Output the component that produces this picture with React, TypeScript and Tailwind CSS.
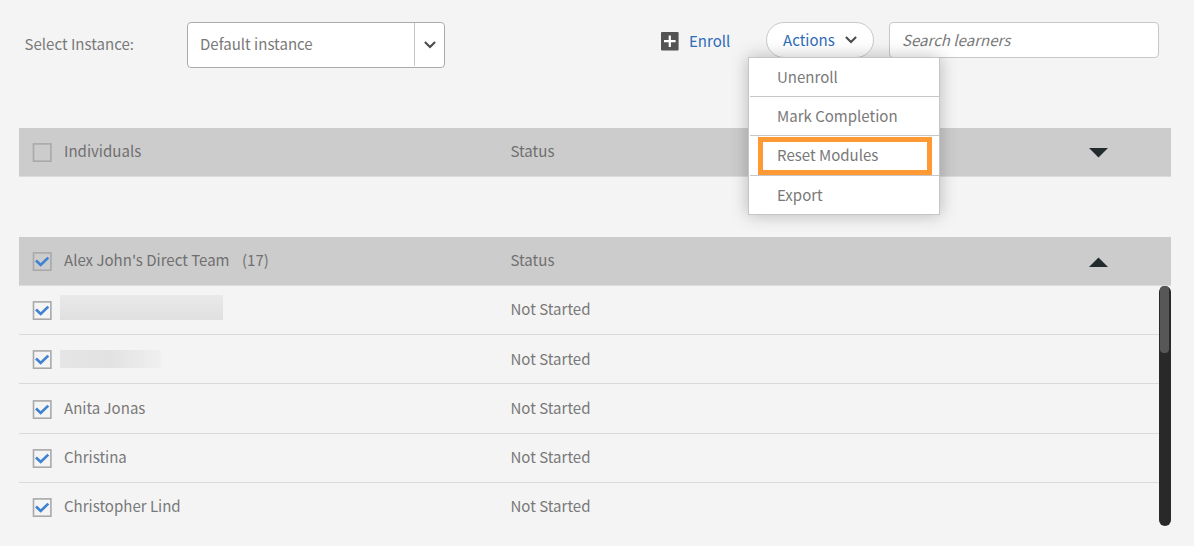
import type { ReactNode } from "react";

type Learner = { name?: string; row: string; text: string; blur?: string };

const learners: Learner[] = [
  { row: "h-[49px]", text: "pt-[11px]", blur: "mt-[9px] h-[25px] w-[163px] bg-gradient-to-b from-[#e9e9e9] to-[#e0e0e0]" },
  { row: "h-[49px]", text: "pt-[12px]", blur: "mt-[15px] h-[18px] w-[101px] bg-gradient-to-r from-[#e5e5e5] via-[#e2e2e2] to-[#f0f0f0]" },
  { name: "Anita Jonas", row: "h-[50px]", text: "pt-[12px]" },
  { name: "Christina", row: "h-[49px]", text: "pt-[11px]" },
  { name: "Christopher Lind", row: "h-[43px]", text: "pt-[11px]" },
];

const menu = [
  { label: "Unenroll", size: "h-[39px] border-b" },
  { label: "Mark Completion", size: "h-[39px] border-b" },
  { label: "Reset Modules", size: "h-[40px] border-b", marked: true },
  { label: "Export", size: "h-[38px]" },
];

function Checkbox({ checked = false }: { checked?: boolean }) {
  return (
    <svg width="20" height="19" viewBox="0 0 20 19" fill="none" className="-ml-px block shrink-0">
      <rect x="1.5" y="0.9" width="17.4" height="17.3" stroke="#a9a9a9" strokeWidth="1.6" />
      {checked && <path d="M4 8.6L8.7 13L16.3 5.6" stroke="#3f82d2" strokeWidth="2.7" />}
    </svg>
  );
}

function Chevron() {
  return (
    <svg width="12" height="8" viewBox="0 0 12 8" fill="none" className="block shrink-0">
      <path d="M0.9 1.1L6 6.1L11.1 1.1" stroke="#4b4b4b" strokeWidth="2.1" />
    </svg>
  );
}

function GroupHeader({ title, checked, open }: { title: ReactNode; checked?: boolean; open?: boolean }) {
  return (
    <div className="flex h-[49px] border-b border-[#dcdcdc] bg-[#cccccc] pl-[14px] text-[#707070]">
      <div className="w-[31px] pt-[15px]">
        <Checkbox checked={checked} />
      </div>
      <div className="w-[446.5px] pt-[11px]">{title}</div>
      <div className="w-[578px] pt-[11px]">Status</div>
      <svg width="20" height="10" viewBox="0 0 20 10" className="mt-[20px]">
        <path d={open ? "M0 10L9.5 0.5L19 10Z" : "M0 0L9.5 9.5L19 0Z"} fill="#222b2d" />
      </svg>
    </div>
  );
}

export default function App() {
  return (
    <div className="h-[546px] w-[1194px] overflow-hidden bg-[#f4f4f4] px-[19px] pt-[22px] font-['Noto_Sans_CJK_SC',sans-serif] text-[15.04px] leading-[24px] text-[#797979]">
      <div className="flex h-[106px] items-start">
        <div className="w-[168px] pt-[10px] pl-[5.5px]">Select Instance:</div>
        <div className="flex h-[46px] w-[258px] rounded-[4px] border border-[#a9abac] bg-white">
          <div className="flex-1 pt-[9px] pl-[12px]">Default instance</div>
          <div className="mb-px flex w-[30px] items-center border-l border-[#c6c6c6] pt-px pl-[9px]">
            <Chevron />
          </div>
        </div>
        <div className="ml-[216px] flex pt-[7px] text-[#2f6cb8]">
          <svg width="18" height="19" viewBox="0 0 18 19" className="mt-[3px] mr-[10px] block">
            <rect width="17.6" height="18.4" rx="1" fill="#535353" />
            <path d="M8.8 3.4V15M3 9.2H14.6" stroke="#fff" strokeWidth="2.2" />
          </svg>
          Enroll
        </div>
        <div className="relative ml-auto">
          <button className="flex h-[36px] w-[108px] items-center rounded-full border border-[#c9c9c9] bg-white pl-[16px] text-[#2f6cb8]">
            <span className="w-[62px] text-left">Actions</span>
            <Chevron />
          </button>
          <div className="absolute top-[35px] left-[-18px] z-10 w-[192px] border border-[#c6c6c6] bg-white pl-px shadow-[0_0_16px_rgba(0,0,0,0.25)]">
            {menu.map((m) => (
              <div key={m.label} className={`relative border-[#c6c6c6] pt-[7px] pl-[27px] ${m.size}`}>
                {m.label}
                {m.marked && <div className="absolute top-[1px] left-[8px] h-[38px] w-[174px] border-5 border-[#ff9933]" />}
              </div>
            ))}
          </div>
        </div>
        <div className="mr-[16px] ml-[15px] h-[36px] w-[270px] rounded-[4px] border border-[#c8c8c8] bg-white pt-[5px] pl-[12px] italic">
          Search learners
        </div>
      </div>
      <div className="w-[1152px]">
        <GroupHeader title="Individuals" />
        <div className="mt-[60px]">
          <GroupHeader
            checked
            open
            title={
              <>
                Alex John's Direct Team<span className="ml-[12.5px]">(17)</span>
              </>
            }
          />
        </div>
        <div className="flex">
          <div className="w-[1140px]">
            {learners.map((l, i) => (
              <div key={i} className={`flex border-[#dadada] pl-[14px] ${i < 4 ? "border-b" : ""} ${l.row}`}>
                <div className={i === 2 ? "w-[31px] pt-[16px]" : "w-[31px] pt-[15px]"}>
                  <Checkbox checked />
                </div>
                <div className={`w-[446.5px] ${l.name ? l.text : ""}`}>
                  {l.name ?? <div className={`-ml-[4px] ${l.blur}`} />}
                </div>
                <div className={l.text}>Not Started</div>
              </div>
            ))}
          </div>
          <div className="h-[240px] w-[12px] rounded-full bg-[#292929] pl-px">
            <div className="h-[67px] w-[9px] rounded-[4px] bg-[#575757]" />
          </div>
        </div>
      </div>
    </div>
  );
}
